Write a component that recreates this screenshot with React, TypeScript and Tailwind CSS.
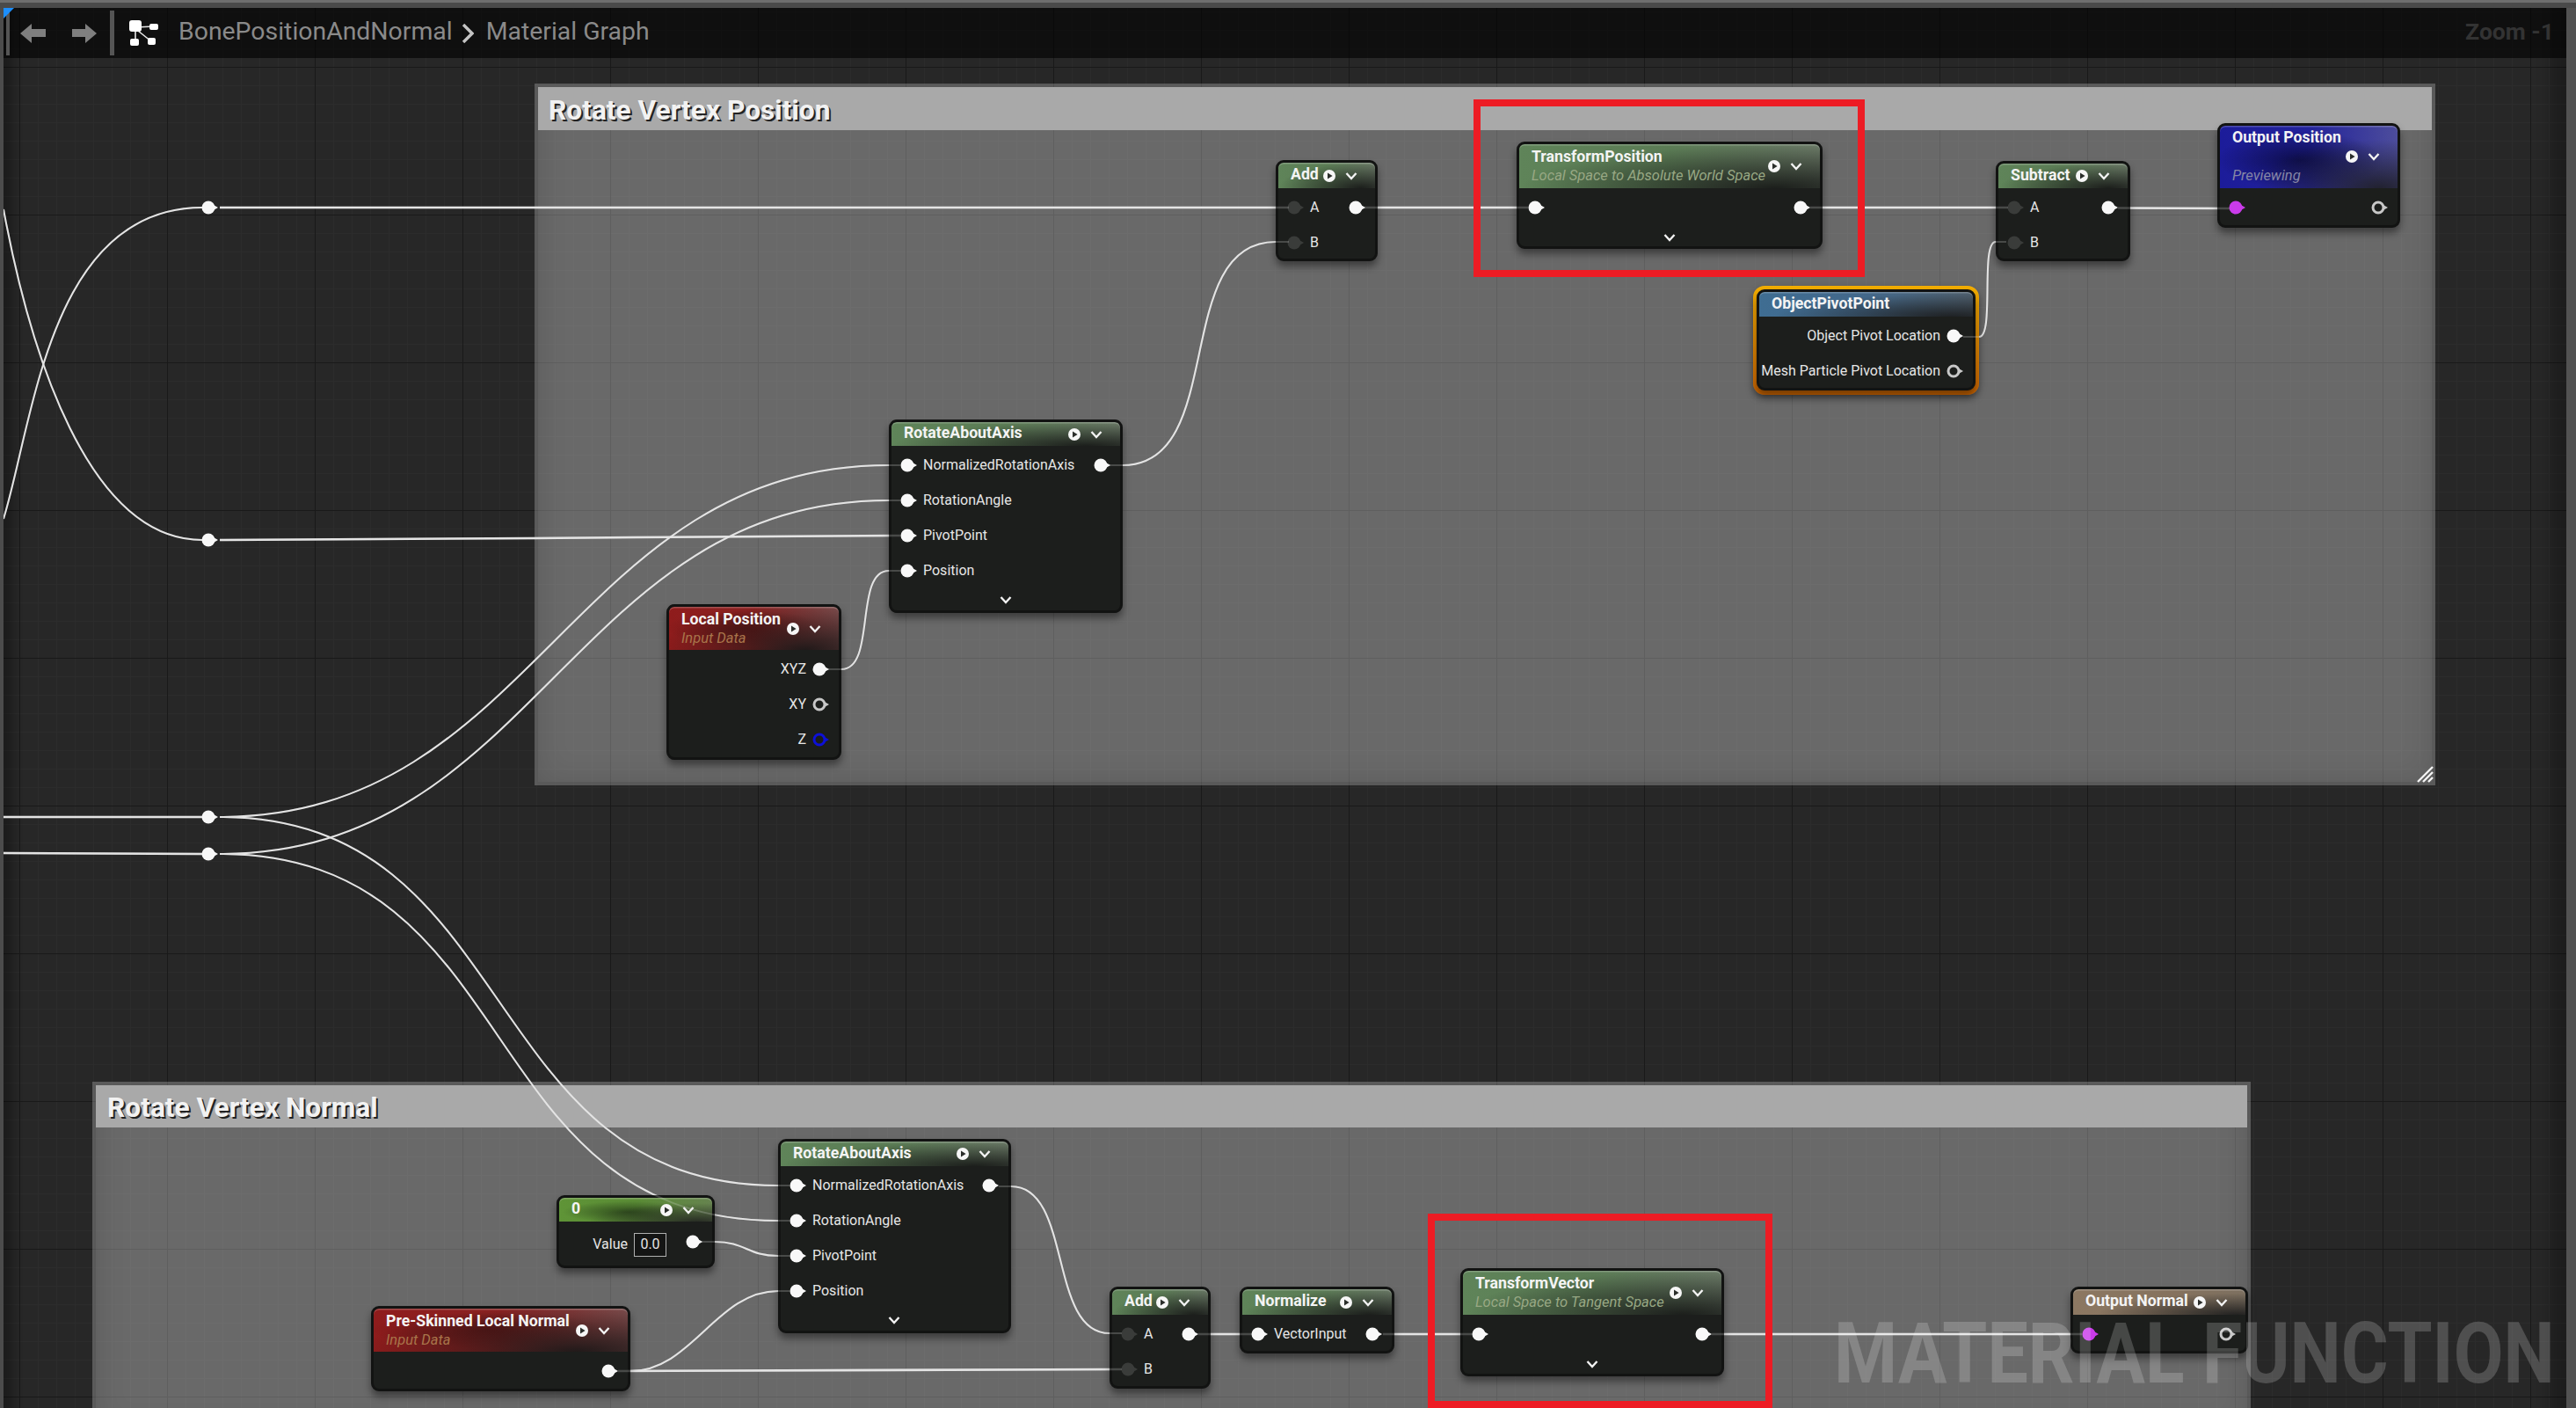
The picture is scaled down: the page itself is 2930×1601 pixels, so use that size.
import React from 'react';

function wire(x0: number, y0: number, x1: number, y1: number, d: number, tailA?: number, tailB?: number): string {
  const head = tailA !== undefined ? `M${tailA} ${y0} L${x0} ${y0}` : `M${x0} ${y0}`;
  const tail = tailB !== undefined ? ` L${tailB} ${y1}` : '';
  return `${head} C${x0 + d} ${y0} ${x1 - d} ${y1} ${x1} ${y1}${tail}`;
}

const STRAIGHT: string[] = [
  'M250 236 L1466 236',
  'M1552 236 L1738 236',
  'M2059 236 L2284 236',
  'M2409 236.5 L2536 237',
  'M250 614 L608 612 L720 611 L1024 609',
  'M0 929 L230 929',
  'M0 970 L230 971',
  'M703 1559 L1276 1557',
  'M1363 1517 L1424 1517',
  'M1573 1517 L1676 1517',
  'M1947 1517 L2368 1517',
];

const CURVES: string[] = [
  'M4 238 C34 400 100 614 230 614',
  'M4 590 C38 480 56 236 230 236',
  wire(250, 929, 1011, 529, 360, undefined, 1024),
  wire(250, 971, 1011, 569, 360, undefined, 1024),
  wire(250, 929, 885, 1348, 345, undefined, 898),
  wire(250, 971, 885, 1388, 350, undefined, 898),
  wire(813, 1412, 885, 1428, 35, 795, 898),
  wire(717, 1559, 885, 1468, 70, 703, 898),
  wire(1277, 529, 1451, 275, 120, 1262, 1466),
  wire(957, 761, 1011, 649, 40, 942, 1024),
  wire(2251, 383, 2270, 275, 18, 2233, 2282),
  wire(1150, 1349, 1262, 1516, 70, 1136, 1276),
];

function Wires({ className }: { className: string }) {
  return (
    <svg className={className} width={2915} height={1592} viewBox="4 9 2915 1592" fill="none">
      {STRAIGHT.map((d, i) => (
        <path key={i} d={d} stroke="#e4e4e4" strokeWidth={2.6} />
      ))}
      {CURVES.map((d, i) => (
        <path key={i} d={d} stroke="#e4e4e4" strokeWidth={2} />
      ))}
    </svg>
  );
}

type PinKind = 'on' | 'off' | 'ring' | 'blue' | 'magenta';

function Pin({ kind = 'on', className = '' }: { kind?: PinKind; className?: string }) {
  const fill = kind === 'on' ? '#f8f8f8' : kind === 'off' ? '#3a3c3a' : kind === 'magenta' ? '#c93be9' : '#1c1e1c';
  const stroke = kind === 'ring' ? '#c8c8c8' : kind === 'blue' ? '#0d10d8' : fill;
  const solid = kind === 'on' || kind === 'off' || kind === 'magenta';
  return (
    <svg width={19} height={16} viewBox="0 0 19 16" className={`shrink-0 ${className}`}>
      <polygon points="13,4.5 19,8 13,11.5" fill={stroke} />
      <circle cx={8} cy={8} r={solid ? 7.5 : 6} fill={fill} stroke={stroke} strokeWidth={solid ? 0 : 3} />
    </svg>
  );
}

function Chevron() {
  return (
    <svg width={14} height={10} viewBox="0 0 14 10" className="shrink-0" fill="none">
      <path d="M1.5 2 L7 8 L12.5 2" stroke="#f2f2f2" strokeWidth={2.4} />
    </svg>
  );
}

function HeaderIcons() {
  return (
    <div className="ml-auto flex shrink-0 items-center gap-[11px] pr-[20px]">
      <svg width={14} height={14} viewBox="0 0 14 14" className="shrink-0">
        <circle cx={7} cy={7} r={7} fill="#f6f6f6" />
        <polygon points="5,3.4 10.6,7 5,10.6" fill="#2a2d2a" />
      </svg>
      <Chevron />
    </div>
  );
}

const G =
  'bg-[radial-gradient(ellipse_at_85%_100%,rgba(24,26,24,0.95),rgba(24,26,24,0.35)_45%,transparent_70%),linear-gradient(90deg,#5f8459,#5b7c55_50%,#6b7a67)]';
const R =
  'bg-[radial-gradient(ellipse_at_80%_100%,rgba(28,24,24,0.95),rgba(40,20,20,0.4)_45%,transparent_75%),radial-gradient(ellipse_at_45%_50%,rgba(30,8,8,0.45),transparent_60%),linear-gradient(90deg,#8f1c1c,#8a2222_50%,#7e4e4e)]';
const B =
  'bg-[radial-gradient(ellipse_at_90%_100%,rgba(30,30,36,0.9),transparent_55%),radial-gradient(ellipse_at_45%_55%,rgba(6,6,50,0.75),transparent_60%),linear-gradient(90deg,#1c1c9a,#22229a_50%,#4d4d9c)]';
const C =
  'bg-[radial-gradient(ellipse_at_90%_100%,rgba(30,30,30,0.85),transparent_55%),radial-gradient(ellipse_at_45%_60%,rgba(30,50,20,0.7),transparent_55%),linear-gradient(90deg,#5f9437,#5a8c35_50%,#66834f)]';
const N =
  'bg-[radial-gradient(ellipse_at_95%_100%,rgba(30,30,30,0.95),transparent_60%),linear-gradient(90deg,#8c7862,#85725e_60%,#7d7060)]';
const S =
  'bg-[radial-gradient(ellipse_at_90%_100%,rgba(28,30,32,0.95),transparent_65%),linear-gradient(90deg,#3f6d92,#43688a_50%,#4e5e6c)]';

function Node({
  className,
  head,
  headH,
  title,
  sub,
  subColor = 'text-[#98a884]',
  noIcons,
  headBody,
  children,
}: {
  className: string;
  head: string;
  headH: string;
  title?: string;
  sub?: string;
  subColor?: string;
  noIcons?: boolean;
  headBody?: React.ReactNode;
  children?: React.ReactNode;
}) {
  return (
    <div className={`absolute flex flex-col rounded-[9px] border-[3px] border-[#121312] bg-[#1c1e1c] shadow-[0_6px_9px_rgba(0,0,0,0.42)] ${className}`}>
      <div className={`flex shrink-0 items-center rounded-t-[6px] pl-[14px] shadow-[inset_0_1.5px_0_rgba(255,255,255,0.22)] ${head} ${headH}`}>
        {title && (
          <div className={`flex flex-col whitespace-nowrap ${sub ? '' : 'mb-[3px]'}`}>
            <span className="text-[17.7px] leading-[22px] font-bold text-[#f4f4f4]">{title}</span>
            {sub && <span className={`text-[16.5px] leading-[22px] italic ${subColor}`}>{sub}</span>}
          </div>
        )}
        {headBody}
        {!noIcons && <HeaderIcons />}
      </div>
      <div className="flex flex-col pt-[2px] pr-[11px] pl-[10px] text-[16px] text-[#e6e6e6]">{children}</div>
    </div>
  );
}

function In({ label, kind }: { label?: string; kind?: PinKind }) {
  return (
    <div className="flex h-[40px] items-center gap-[7px]">
      <Pin kind={kind} />
      {label && <span className="whitespace-nowrap">{label}</span>}
    </div>
  );
}

function InOut({ label, kind, out }: { label?: string; kind?: PinKind; out?: PinKind }) {
  return (
    <div className="flex h-[40px] items-center justify-between">
      <div className="flex items-center gap-[7px]">
        <Pin kind={kind} />
        {label && <span className="whitespace-nowrap">{label}</span>}
      </div>
      <Pin kind={out} />
    </div>
  );
}

function Out({ label, kind }: { label?: string; kind?: PinKind }) {
  return (
    <div className="flex h-[40px] items-center justify-end gap-[7px]">
      {label && <span className="whitespace-nowrap">{label}</span>}
      <Pin kind={kind} />
    </div>
  );
}

function Foot({ h }: { h: string }) {
  return (
    <div className={`flex items-center justify-center ${h}`}>
      <Chevron />
    </div>
  );
}

function Comment({ className, title, titleClass }: { className: string; title: string; titleClass: string }) {
  return (
    <div className={`absolute border-[4px] border-[#00000026] bg-[#ffffff4e] shadow-[inset_0_0_34px_rgba(0,0,0,0.13)] ${className}`}>
      <div className={`flex items-center bg-[#a9a9a9] pt-[4px] ${titleClass}`}>
        <span className="text-[31.7px] leading-none font-bold whitespace-nowrap text-[#f2f2f2] [text-shadow:2px_2px_0_#222222]">{title}</span>
      </div>
    </div>
  );
}

export default function App() {
  return (
    <div className="relative flex h-[1601px] w-[2930px] flex-col overflow-hidden bg-[#4d4d4d] [font-family:Roboto,sans-serif]">
      <div className="h-[3px] shrink-0 bg-[#6e6e6e]" />
      <div className="h-[6px] shrink-0 bg-[#4a4a4a]" />
      <div className="flex min-h-0 flex-1">
        <div className="w-[4px] shrink-0 bg-[#4c4c4c]" />
        <div className="flex-1 bg-[#272727] bg-[linear-gradient(90deg,#191919_1.5px,transparent_1.5px),linear-gradient(#191919_1.5px,transparent_1.5px),linear-gradient(90deg,#2c2c2c_1px,transparent_1px),linear-gradient(#2c2c2c_1px,transparent_1px)] [background-position:18px_67px,18px_67px,18px_4px,18px_4px] [background-size:168px_168px,168px_168px,21px_21px,21px_21px] shadow-[inset_22px_0_12px_-12px_rgba(0,0,0,0.3),inset_-34px_0_16px_-16px_rgba(0,0,0,0.25)]">
          <div className="flex h-[57px] items-center bg-[#00000099] pr-[14px]">
            <div className="ml-[3px] h-[51px] w-[4px] bg-[#555555]" />
            <svg width={29} height={22} viewBox="0 0 29 22" className="ml-[12px] shrink-0">
              <path d="M0 11 L13 0 V6 H29 V15 H13 V22 Z" fill="#7f7f7f" />
            </svg>
            <svg width={28} height={22} viewBox="0 0 28 22" className="ml-[30px] shrink-0">
              <path d="M28 11 L15 0 V6 H0 V15 H15 V22 Z" fill="#7f7f7f" />
            </svg>
            <div className="ml-[15px] h-[51px] w-[5px] bg-[#555555]" />
            <svg width={33} height={29} viewBox="0 0 33 29" className="ml-[17px] shrink-0">
              <path d="M8 8 L28 7 M7 10 L7 25 M10 12 L25 24" stroke="#e8e8e8" strokeWidth={1.6} fill="none" />
              <rect x={0} y={0} width={14} height={13} rx={3} fill="#ffffff" />
              <rect x={23} y={4} width={10} height={7} rx={2} fill="#ffffff" />
              <rect x={1} y={21} width={10} height={8} rx={2} fill="#ffffff" />
              <rect x={21} y={20} width={9} height={8} rx={2} fill="#ffffff" />
            </svg>
            <span className="mb-[3px] ml-[23px] text-[28.4px] whitespace-nowrap text-[#8a8a8a]">BonePositionAndNormal</span>
            <svg width={14} height={22} viewBox="0 0 14 22" className="ml-[10px] shrink-0" fill="none">
              <path d="M2 1 L12 11 L2 21" stroke="#c4c4c4" strokeWidth={3.4} />
            </svg>
            <span className="mb-[3px] ml-[14px] text-[28.4px] whitespace-nowrap text-[#8a8a8a]">Material Graph</span>
            <span className="mb-[3px] ml-auto text-[26.5px] font-bold whitespace-nowrap text-[#333333]">Zoom -1</span>
          </div>
        </div>
        <div className="w-[11px] shrink-0 bg-[#525252]" />
      </div>

      <svg width={12} height={12} viewBox="0 0 12 12" className="absolute top-[9px] left-[4px]">
        <polygon points="0,0 12,0 0,12" fill="#1c8fff" />
      </svg>

      <Comment className="top-[95px] left-[608px] h-[798px] w-[2162px]" title="Rotate Vertex Position" titleClass="h-[49px] pl-[12px]" />
      <Comment className="top-[1230px] left-[105px] h-[400px] w-[2455px]" title="Rotate Vertex Normal" titleClass="h-[48px] pl-[13px]" />

      <svg width={20} height={20} viewBox="0 0 20 20" className="absolute top-[870px] left-[2748px]" fill="none">
        <path d="M2 19 L19 2 M8 19 L19 8 M14 19 L19 14" stroke="#f4f4f4" strokeWidth={2.4} />
      </svg>

      <Wires className="absolute top-[9px] left-[4px]" />

      <Pin className="absolute top-[228px] left-[229px]" />
      <Pin className="absolute top-[606px] left-[229px]" />
      <Pin className="absolute top-[921px] left-[229px]" />
      <Pin className="absolute top-[963px] left-[229px]" />

      <Node className="top-[182px] left-[1451px] h-[115px] w-[116px]" head={G} headH="h-[29px]" title="Add">
        <InOut label="A" kind="off" />
        <In label="B" kind="off" />
      </Node>

      <Node className="top-[161px] left-[1725px] h-[122px] w-[348px]" head={G} headH="h-[50px]" title="TransformPosition" sub="Local Space to Absolute World Space">
        <InOut />
        <Foot h="h-[27px]" />
      </Node>

      <Node className="top-[183px] left-[2270px] h-[114px] w-[153px]" head={G} headH="h-[28px]" title="Subtract">
        <InOut label="A" kind="off" />
        <In label="B" kind="off" />
      </Node>

      <div className="absolute top-[325px] left-[1994px] h-[124px] w-[257px] rounded-[13px] bg-[linear-gradient(#f3ae00,#c96300)] shadow-[0_4px_8px_rgba(0,0,0,0.35)]" />
      <Node className="top-[329px] left-[1998px] h-[115px] w-[249px]" head={S} headH="h-[28px]" title="ObjectPivotPoint" noIcons>
        <Out label="Object Pivot Location" />
        <Out label="Mesh Particle Pivot Location" kind="ring" />
      </Node>

      <Node className="top-[477px] left-[1011px] h-[220px] w-[266px]" head={G} headH="h-[27px]" title="RotateAboutAxis">
        <InOut label="NormalizedRotationAxis" />
        <In label="RotationAngle" />
        <In label="PivotPoint" />
        <In label="Position" />
        <Foot h="h-[26px]" />
      </Node>

      <Node className="top-[687px] left-[758px] h-[177px] w-[199px]" head={R} headH="h-[49px]" title="Local Position" sub="Input Data" subColor="text-[#a8744a]">
        <Out label="XYZ" />
        <Out label="XY" kind="ring" />
        <Out label="Z" kind="blue" />
      </Node>

      <Node className="top-[1295px] left-[885px] h-[221px] w-[265px]" head={G} headH="h-[28px]" title="RotateAboutAxis">
        <InOut label="NormalizedRotationAxis" />
        <In label="RotationAngle" />
        <In label="PivotPoint" />
        <In label="Position" />
        <Foot h="h-[26px]" />
      </Node>

      <Node className="top-[1359px] left-[633px] h-[83px] w-[180px]" head={C} headH="h-[27px]" title="0">
        <div className="mt-[4px] flex h-[40px] items-center justify-end">
          <span>Value</span>
          <span className="ml-[7px] flex h-[27px] w-[37px] items-center justify-center border-[1.5px] border-[#b0b0b0] bg-[#141514]">0.0</span>
          <Pin className="mb-[6px] ml-[22px]" />
        </div>
      </Node>

      <Node className="top-[1485px] left-[422px] h-[97px] w-[295px]" head={R} headH="h-[49px]" title="Pre-Skinned Local Normal" sub="Input Data" subColor="text-[#a8744a]">
        <Out />
      </Node>

      <Node className="top-[1463px] left-[1262px] h-[116px] w-[115px]" head={G} headH="h-[29px]" title="Add">
        <InOut label="A" kind="off" />
        <In label="B" kind="off" />
      </Node>

      <Node className="top-[1463px] left-[1410px] h-[76px] w-[176px]" head={G} headH="h-[29px]" title="Normalize">
        <InOut label="VectorInput" />
      </Node>

      <Node className="top-[1442px] left-[1661px] h-[123px] w-[300px]" head={G} headH="h-[50px]" title="TransformVector" sub="Local Space to Tangent Space">
        <InOut />
        <Foot h="h-[27px]" />
      </Node>

      <Node className="top-[1463px] left-[2355px] h-[76px] w-[202px]" head={N} headH="h-[29px]" title="Output Normal">
        <InOut kind="magenta" out="ring" />
      </Node>

      <Node
        className="top-[140px] left-[2522px] h-[119px] w-[208px]"
        head={B}
        headH="h-[71px]"
        noIcons
        headBody={
          <div className="flex h-[71px] w-full flex-col">
            <span className="text-[17.7px] leading-[26px] font-bold whitespace-nowrap text-[#f4f4f4]">Output Position</span>
            <div className="flex h-[18px] items-center">
              <HeaderIcons />
            </div>
            <span className="text-[16.5px] leading-[26px] italic text-[#8686a6]">Previewing</span>
          </div>
        }
      >
        <InOut kind="magenta" out="ring" />
      </Node>

      <Wires className="absolute top-[9px] left-[4px] opacity-[0.22]" />

      <div className="absolute top-[113px] left-[1676px] h-[202px] w-[445px] border-[8px] border-[#ed1c24]" />
      <div className="absolute top-[1380px] left-[1624px] h-[221px] w-[392px] border-[8px] border-[#ed1c24]" />

      <div className="absolute top-[1491px] left-[2086px] origin-left scale-x-[0.85] text-[97px] leading-none font-bold whitespace-nowrap text-[#ffffff30]">
        MATERIAL FUNCTION
      </div>
    </div>
  );
}
